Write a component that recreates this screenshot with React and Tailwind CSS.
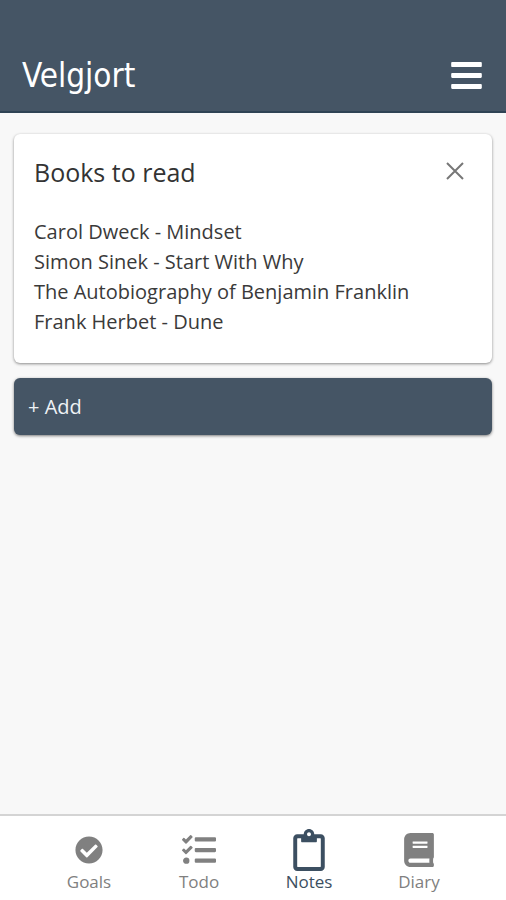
import React, { useState } from 'react';
import { FaBars, FaBook, FaCheckCircle, FaRegClipboard, FaTasks } from 'react-icons/fa';

const tabs = [
    { name: 'Goals', icon: FaCheckCircle, size: 28 },
    { name: 'Todo', icon: FaTasks, size: 34 },
    { name: 'Notes', icon: FaRegClipboard, size: 42 },
    { name: 'Diary', icon: FaBook, size: 34 },
];

const Header = () => (
    <header className="flex items-center justify-between bg-[#455565] border-b-2 border-[#2f4354] px-[22px] pt-10 h-[113px]">
        <h1 className="font-['DejaVu_Sans_Condensed','DejaVu_Sans',sans-serif] text-[33px] leading-[44px] text-white">Velgjort</h1>
        <button aria-label="Menu" className="text-white">
            <FaBars size={35} />
        </button>
    </header>
);

const NoteCard = ({ title, lines, onRemove }) => (
    <section className="bg-white rounded-md px-5 pt-5 pb-[26px] shadow-[0_1px_3px_rgba(0,0,0,0.45)]">
        <div className="flex items-start justify-between">
            <h2 className="text-[25px] leading-9 text-[#333]">{title}</h2>
            <button aria-label="Remove note" onClick={onRemove} className="p-2 text-[#777]">
                <svg width="18" height="18" viewBox="0 0 18 18" stroke="currentColor" strokeWidth="2" fill="none">
                    <path d="M1 1l16 16M17 1L1 17" />
                </svg>
            </button>
        </div>
        <ul className="mt-[27px] text-[20px] leading-[30px] text-[#3a3a3a]">
            {lines.map((line) => (
                <li key={line}>{line}</li>
            ))}
        </ul>
    </section>
);

const App = () => {
    const [active, setActive] = useState('Notes');
    const [notes, setNotes] = useState([
        {
            title: 'Books to read',
            lines: [
                'Carol Dweck - Mindset',
                'Simon Sinek - Start With Why',
                'The Autobiography of Benjamin Franklin',
                'Frank Herbet - Dune',
            ],
        },
    ]);

    const addNote = () => setNotes([...notes, { title: 'New note', lines: [] }]);
    const removeNote = (index) => setNotes(notes.filter((_, i) => i !== index));

    return (
        <div className="flex flex-col min-h-screen bg-[#f8f8f8] font-['Open_Sans',sans-serif]">
            <Header />

            <main className="flex flex-col flex-1 gap-[15px] px-[14px] pt-[21px]">
                {notes.map((note, index) => (
                    <NoteCard key={index} title={note.title} lines={note.lines} onRemove={() => removeNote(index)} />
                ))}
                <button
                    onClick={addNote}
                    className="rounded-md bg-[#455565] px-[14px] h-[57px] text-left text-[20px] text-[#eef2f5] shadow-[0_1px_3px_rgba(0,0,0,0.5)]"
                >
                    + Add
                </button>
            </main>

            <nav className="grid grid-cols-4 bg-white border-t-2 border-[#d4d4d4] pl-[34px] pr-8 pt-3 pb-2">
                {tabs.map(({ name, icon: Icon, size }) => (
                    <button
                        key={name}
                        onClick={() => setActive(name)}
                        className={`flex flex-col items-center text-[17px] leading-5 ${active === name ? 'text-[#3c4f61]' : 'text-[#808080]'}`}
                    >
                        <span className="flex items-center h-[44px]">
                            <Icon size={size} />
                        </span>
                        {name}
                    </button>
                ))}
            </nav>
        </div>
    );
};

export default App;
